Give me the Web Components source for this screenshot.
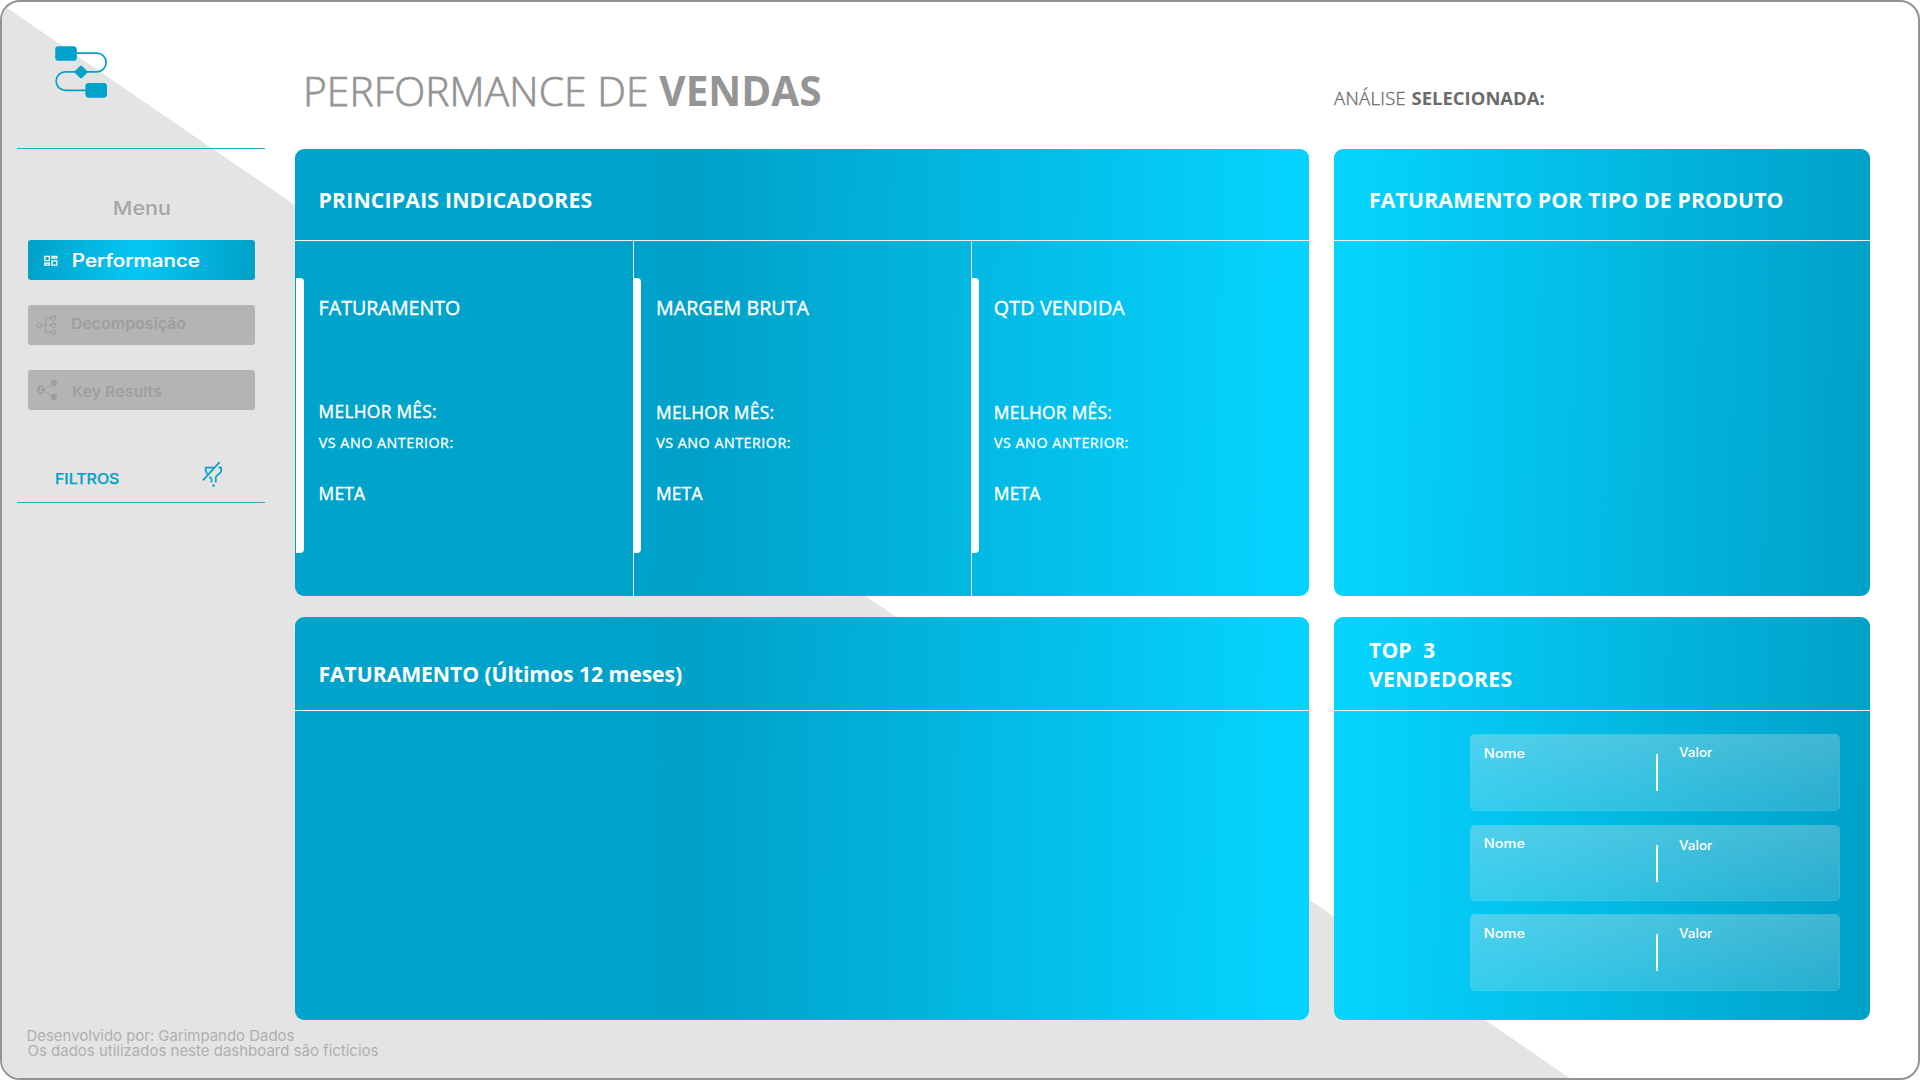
<!DOCTYPE html>
<html lang="pt-BR">
<head>
<meta charset="utf-8">
<title>Performance de Vendas</title>
<style>
html,body{margin:0;padding:0;background:#fff}
body{width:1920px;height:1080px;overflow:hidden;font-family:"Open Sans","Noto Sans",sans-serif}
</style>
</head>
<body>
<sales-dashboard></sales-dashboard>
<script>
const make = (name, html, setup) => {
  const tpl = document.createElement('template');
  tpl.innerHTML = html;
  customElements.define(name, class extends HTMLElement {
    constructor() {
      super();
      this.attachShadow({mode: 'open'}).append(tpl.content.cloneNode(true));
    }
    connectedCallback() { if (setup) setup(this, this.shadowRoot); }
  });
};
const ctx = document.createElement('canvas').getContext('2d');

// One line of text whose box is its cap height by its inked width.
// size: font size, w: inked width, wide: stretch the glyphs instead of the tracking,
// heavy: extra outline width in px.
make('fit-text', `
<style>
:host{display:block;flex:none}
span{display:block;white-space:pre;width:max-content;transform-origin:0 50%}
</style><span><slot></slot></span>`, (el, root) => {
  const span = root.querySelector('span');
  const size = +el.getAttribute('size'), w = +el.getAttribute('w');
  const inter = el.hasAttribute('inter');
  const family = inter ? 'Inter' : 'Open Sans';
  const weight = el.getAttribute('weight') || 400;
  const cap = Math.round(size * (inter ? .727 : .714));
  el.style.cssText += `;font:${weight} ${size}px/${cap}px "${family}",sans-serif;height:${cap}px;width:${w}px`;
  if (el.hasAttribute('heavy')) span.style.webkitTextStroke = el.getAttribute('heavy') + 'px currentColor';
  ctx.font = `${weight} ${size}px "${family}"`;
  const text = el.textContent;
  const m = ctx.measureText(text);
  const ink = m.actualBoundingBoxLeft + m.actualBoundingBoxRight;
  const dy = inter ? 0 : Math.round(-.031 * size);
  if (el.hasAttribute('wide')) {
    const k = w / ink;
    span.style.transform = `translate(${m.actualBoundingBoxLeft * k}px,${dy}px) scaleX(${k})`;
  } else {
    span.style.letterSpacing = (w - ink) / (text.length - 1) + 'px';
    span.style.transform = `translate(${m.actualBoundingBoxLeft}px,${dy}px)`;
  }
});

make('brand-logo', `
<style>:host{display:block;width:54px;height:54px}svg{display:block}</style>
<svg width="54" height="54" viewBox="54 45 54 54">
<path d="M76 53.2H96.8a9.3 9.3 0 0 1 0 18.6H65.4a9.3 9.3 0 0 0 0 18.6H86" fill="none" stroke="#00a2ca" stroke-width="1.7"/>
<rect x="55.2" y="46.2" width="21.6" height="14.6" rx="3.4" fill="#00a2ca"/>
<rect x="85.4" y="83.1" width="21.6" height="14.6" rx="3.4" fill="#00a2ca"/>
<rect x="-5" y="-5" width="10" height="10" rx="1.4" transform="translate(81 72) rotate(45)" fill="#00a2ca"/>
</svg>`);

make('nav-item', `
<style>
:host{display:flex;width:227px;height:40px;border-radius:3px;background:#b4b4b4;color:#9e9e9e;box-sizing:border-box}
:host([active]){color:#fff;background:linear-gradient(95deg,#01a2c9 2%,#05c7f4 48%,#01a2c9 97%)}
.icon{width:30px;height:40px;flex:none}
.label{padding:var(--label-pad);display:block}
</style><div class="icon"><slot name="icon"></slot></div><div class="label"><slot></slot></div>`);

make('side-bar', `
<style>
:host{display:flex;flex-direction:column;width:293px;height:1076px;box-sizing:border-box}
.brand{height:146px;box-sizing:border-box;padding:43px 0 0 52px}
.rule{height:1px;width:248px;margin-left:15px;background:#22accb;flex:none}
.menu{color:#a6a6a6;padding:53px 0 24px 112px}
nav{display:flex;flex-direction:column;gap:25px;padding-left:26px}
svg{display:block}
.filter{display:flex;height:92px;padding-left:54px;box-sizing:border-box;color:#06a2c9}
.filter fit-text{margin-top:63px}
.filter svg{margin:51px 0 0 83px}
footer{margin-top:auto;padding:0 0 22px 25.5px;color:#afafaf;display:flex;flex-direction:column;gap:4px}
</style>
<div class="brand"><brand-logo></brand-logo></div>
<div class="rule"></div>
<div class="menu"><fit-text inter wide size="19" w="56.5" weight="500">Menu</fit-text></div>
<nav>
<nav-item active style="--label-pad:14px 0 0 15px">
<svg slot="icon" width="30" height="40" viewBox="28 240 30 40" fill="none" stroke="#fff" stroke-width="1.3">
<path d="M44.8 256.3h4.6v4.3h-4.6zM52 256.3h4.8v1.9H52zM44.8 263.2h4.6v1.9h-4.6zM52 260.9h4.8v4.2H52z"/></svg>
<fit-text inter wide size="18" w="126.3" weight="500" heavy=".2">Performance</fit-text></nav-item>
<nav-item style="--label-pad:13px 0 0 14px">
<svg slot="icon" width="30" height="40" viewBox="28 305 30 40" fill="none" stroke="#9e9e9e" stroke-width="1.1">
<circle cx="39.1" cy="325.3" r="2.1"/><circle cx="53.4" cy="318.1" r="2.2"/><circle cx="53.4" cy="325.3" r="2.2"/><circle cx="53.4" cy="332.4" r="2.2"/>
<path d="M41.2 325.3h10M51.2 318.1h-5.7v14.3h5.7"/></svg>
<fit-text inter wide size="15" w="113.8" weight="600">Decomposição</fit-text></nav-item>
<nav-item style="--label-pad:16px 0 0 15px">
<svg slot="icon" width="30" height="40" viewBox="28 370 30 40">
<circle cx="41" cy="389.8" r="4.2" fill="#9e9e9e"/><circle cx="41" cy="388.3" r="1.2" fill="#b4b4b4"/><path d="M38.5 392.2c.5-2.4 4.5-2.4 5 0z" fill="#b4b4b4"/>
<circle cx="54" cy="383.1" r="3.1" fill="#9e9e9e"/><circle cx="54" cy="396.9" r="3.1" fill="#9e9e9e"/>
<path d="M46.2 387.6l4.3-2.7M46.2 392.4l4.3 2.7" stroke="#9e9e9e" stroke-width="1.2" stroke-dasharray="2.4 .7"/></svg>
<fit-text inter wide size="15" w="88.6" weight="600">Key Results</fit-text></nav-item>
</nav>
<div class="filter"><fit-text inter wide size="14.5" w="63" weight="500" heavy=".25">FILTROS</fit-text>
<svg width="22" height="28" viewBox="202 461 22 28" fill="none" stroke="#06a2c9" stroke-width="1.7">
<path d="M202.9 480.3L219.6 462.2"/><path d="M214 467.7h-8.3v2.6l1.6 3.9M218.4 467.7h2.8v3.8c0 1.6-5.4 3.6-5.4 5.8v5.3M209.3 476.7c1.3.6 2.2 1.3 2.2 3v2.9"/><circle cx="213.5" cy="485.5" r="1.3" fill="#06a2c9" stroke="none"/></svg></div>
<div class="rule"></div>
<footer>
<fit-text inter size="15" w="267" weight="400">Desenvolvido por: Garimpando Dados</fit-text>
<fit-text inter size="15" w="351" weight="400">Os dados utilizados neste dashboard são fictícios</fit-text>
</footer>`);

make('data-panel', `
<style>
:host{display:flex;flex-direction:column;border-radius:9px;overflow:hidden;color:#fff;background:linear-gradient(91deg,#00a4cb 0,#00a1c8 40%,#05d3ff 97%)}
:host([flip]){background:linear-gradient(91deg,#05d4ff 3%,#00a1c8 98%)}
header{height:var(--head,91px);border-bottom:1px solid #e9f9fd;flex:none;box-sizing:content-box}
.body{flex:1;display:flex;min-height:0}
</style><header><slot name="head"></slot></header><div class="body"><slot></slot></div>`);

make('kpi-card', `
<style>
:host{display:flex;width:338px;height:100%;box-sizing:border-box;border-left:1px solid var(--line,#e9f9fd)}
.bar{width:var(--bar,7px);height:275px;margin-top:37px;background:#fff;border-radius:0 4px 4px 0;flex:none}
.texts{padding-top:61px;padding-left:var(--pad,16px)}
</style><div class="bar"></div><div class="texts"><slot></slot></div>`);

make('seller-row', `
<style>
:host{display:flex;width:370px;height:77px;box-sizing:border-box;border:1px solid rgba(255,255,255,.22);border-radius:5px;background:linear-gradient(175deg,rgba(228,228,228,.34),rgba(228,228,228,.17)) padding-box;flex:none}
.name{width:185px;padding:var(--ny,14px) 0 0 14.4px;box-sizing:border-box}
.sep{width:2px;height:37px;margin-top:19px;background:#f2fcff}
.value{padding:var(--vy,14px) 0 0 20.6px}
</style><div class="name"><slot name="name"></slot></div><div class="sep"></div><div class="value"><slot name="value"></slot></div>`);

const kpi = (title, w, style, monthGap) => `<kpi-card style="${style}">
<fit-text size="19.6" w="${w}" heavy=".4">${title}</fit-text>
<fit-text size="17.4" w="116.5" heavy=".4" style="margin-top:${monthGap - 1}px">MELHOR MÊS:</fit-text>
<fit-text size="14.3" w="133.6" heavy=".3" style="margin:${111 - monthGap}px 0 0 -.8px">VS ANO ANTERIOR:</fit-text>
<fit-text size="17.4" w="45.5" heavy=".4" style="margin-top:40px">META</fit-text></kpi-card>`;
const seller = (style) => `<seller-row style="${style}"><fit-text slot="name" inter wide size="12.5" w="39.6" weight="500">Nome</fit-text><fit-text slot="value" inter wide size="12.5" w="33.5" weight="500">Valor</fit-text></seller-row>`;

make('sales-dashboard', `
<style>
:host{display:flex;position:relative;width:1920px;height:1080px;box-sizing:border-box;border:2px solid #939393;border-radius:20px;overflow:hidden;background:#fff}
.wedge{position:absolute;left:-2px;top:-2px;z-index:0}
side-bar,main{position:relative;flex:none}
main{width:1575px;display:grid;grid-template-columns:1014px 536px;grid-template-rows:147px 448px 423px;column-gap:25px}
.title,.sel{display:flex;align-items:flex-start}
.title{padding:75px 0 0 12px;color:#959595;gap:13.3px}
.sel{color:#6b6b6b;padding-top:90px;gap:6px}
.top{height:447px}
.bottom{--head:93px;margin-top:20px;height:403px}
.sellers{display:flex;flex-direction:column;padding:23px 0 0 136px}
</style>
<svg class="wedge" width="1920" height="1080"><path d="M0 3.2L1572.6 1080H0z" fill="#e4e4e4"/></svg>
<side-bar></side-bar>
<main>
<div class="title"><fit-text size="40.6" w="339" weight="300" heavy=".75">PERFORMANCE DE</fit-text><fit-text size="40.6" w="161" weight="700">VENDAS</fit-text></div>
<div class="sel"><fit-text size="18.4" w="71.5" weight="300" heavy=".35">ANÁLISE</fit-text><fit-text size="18.4" w="133" weight="700">SELECIONADA:</fit-text></div>
<data-panel class="top">
<fit-text slot="head" size="21.2" w="272" weight="700" style="margin:44px 0 0 24.5px">PRINCIPAIS INDICADORES</fit-text>
${kpi('FATURAMENTO', 140.5, '--line:transparent;--bar:8px;--pad:15.6px', 91)}
${kpi('MARGEM BRUTA', 152.6, '--pad:16px', 92)}
${kpi('QTD VENDIDA', 130.5, '--pad:15.8px', 92)}
</data-panel>
<data-panel class="top" flip>
<fit-text slot="head" size="21.2" w="412.6" weight="700" style="margin:44px 0 0 36px">FATURAMENTO POR TIPO DE PRODUTO</fit-text>
</data-panel>
<data-panel class="bottom">
<fit-text slot="head" size="21.2" w="362.5" weight="700" style="margin:50px 0 0 24.5px">FATURAMENTO (Últimos 12 meses)</fit-text>
</data-panel>
<data-panel class="bottom" flip>
<div slot="head" style="padding:26px 0 0 35px"><fit-text size="21.2" w="66" weight="700">TOP  3</fit-text><fit-text size="21.2" w="142.5" weight="700" style="margin-top:14px">VENDEDORES</fit-text></div>
<div class="sellers">${seller('--ny:14px;--vy:13px')}${seller('--ny:13px;--vy:15px;margin-top:14px;height:76px')}${seller('margin-top:13px')}</div>
</data-panel>
</main>`);
</script>
</body>
</html>
